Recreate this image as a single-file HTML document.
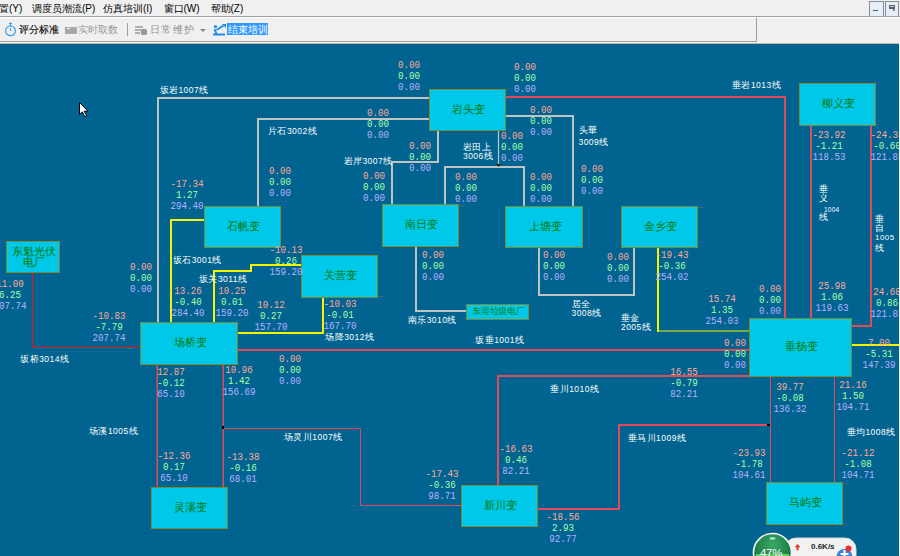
<!DOCTYPE html>
<html><head><meta charset="utf-8"><style>
*{margin:0;padding:0;box-sizing:border-box}
html,body{width:900px;height:556px;overflow:hidden;background:#f0f0f0;font-family:"Liberation Sans",sans-serif}
#menu{position:absolute;left:0;top:0;width:900px;height:16px;background:#f0f0f0}
#menu span{position:absolute;top:1.5px;font-size:10px;line-height:14px;color:#000;white-space:nowrap}
#tb{position:absolute;left:0;top:17px;width:757px;height:25px;background:#f0f0f0;border-top:1px solid #fff;border-right:1px solid #a0a0a0;border-bottom:1px solid #a0a0a0}
.tbt{position:absolute;top:23px;font-size:11px;line-height:14px;white-space:nowrap}
#cv{position:absolute;left:0;top:44px;width:899px;height:512px;background:#006390;overflow:hidden}
svg{position:absolute;left:0;top:0}
.st{position:absolute;background:#00c8e8;border:1px solid #7a8a30;color:#007a00;font-size:10.5px;line-height:11px;display:flex;align-items:center;justify-content:center;text-align:center;padding-bottom:2px;padding-left:2px}
.tr{position:absolute;width:60px;font-family:"Liberation Mono",monospace;font-size:10px;line-height:11px;text-align:center;white-space:pre;transform:scaleX(0.92)}
.tr i{display:block;font-style:normal}
.lb{position:absolute;color:#fff;font-size:8.5px;line-height:11px;white-space:nowrap;letter-spacing:0.45px}
</style></head><body>
<div id="menu">
<span style="left:-1px">置(Y)</span>
<span style="left:32px">调度员潮流(P)</span>
<span style="left:103px">仿真培训(I)</span>
<span style="left:163.5px">窗口(W)</span>
<span style="left:210.5px">帮助(Z)</span>
</div>
<div style="position:absolute;left:0;top:16px;width:900px;height:1px;background:#a0a0a0"></div>
<div id="tb"></div>
<div style="position:absolute;left:757px;top:17px;width:143px;height:25px;background:#f0f0f0;border-top:1px solid #fff"></div>
<div style="position:absolute;left:869px;top:1px;width:15px;height:15px;background:#e6eef8;border:1px solid #848c96;border-bottom:none"></div>
<div style="position:absolute;left:873px;top:10px;width:5px;height:1px;background:#505860"></div>
<div style="position:absolute;left:885px;top:1px;width:14px;height:15px;background:#e6eef8;border:1px solid #848c96;border-bottom:none"></div>
<svg width="900" height="45" style="position:absolute;left:0;top:0">
<rect x="889" y="5" width="6" height="4" fill="#586270"/><rect x="890" y="6" width="4" height="1" fill="#c8d0da"/><rect x="893" y="9" width="1.5" height="2" fill="#586270"/>
<circle cx="10.5" cy="30.8" r="4.9" fill="none" stroke="#3a9ef0" stroke-width="1.2"/>
<path d="M10.5 22.5v3.5 M9 23.5h3 M10.5 28v3" stroke="#3a9ef0" stroke-width="1.1" fill="none"/>
<rect x="65" y="27" width="12" height="7" fill="#a8a8a8"/>
<path d="M67 29l2 -1l1 1" stroke="#fff" stroke-width="1" fill="none"/>
<rect x="127" y="23" width="1" height="13" fill="#a0a0a0"/>
<path d="M135 27h8 M135 30h7 M135 33h5" stroke="#999" stroke-width="1.5"/>
<rect x="141" y="29" width="6" height="6" rx="1.5" fill="#999"/>
<path d="M200 29h6l-3 3z" fill="#888"/>
<circle cx="215.5" cy="26.5" r="1.6" fill="#1e8ce6"/><path d="M214.5 29l2 5 M216.5 30l7-4.5 M213 34.5h12" stroke="#1e8ce6" stroke-width="2" fill="none"/><path d="M222 24h4v4z" fill="#1e8ce6"/>
</svg>
<span class="tbt" style="left:18.5px;color:#000;font-size:10px;-webkit-text-stroke:0.15px #000">评分标准</span>
<span class="tbt" style="left:78px;color:#9a9a9a;font-size:10px">实时取数</span>
<span class="tbt" style="left:150px;color:#8c8c8c;font-size:10px;letter-spacing:1.4px">日常维护</span>
<span style="position:absolute;left:227px;top:23px;width:41px;height:12px;background:#3399ff"></span>
<span class="tbt" style="left:228px;color:#fff;font-size:10px">结束培训</span>

<div style="position:absolute;left:0;top:42px;width:900px;height:1px;background:#f4f2f0"></div><div style="position:absolute;left:0;top:43px;width:900px;height:1px;background:#c4baa8"></div><div id="cv"></div>
<svg width="900" height="556" viewBox="0 0 900 556" style="position:absolute;left:0;top:0">
<polyline points="158,322 158,98 429,98" fill="none" stroke="#c0c4c0" stroke-width="2" stroke-linecap="square"/>
<polyline points="258,206 258,119 429,119" fill="none" stroke="#c0c4c0" stroke-width="2" stroke-linecap="square"/>
<polyline points="438,131 438,162 392,162 392,204" fill="none" stroke="#c0c4c0" stroke-width="2" stroke-linecap="square"/>
<polyline points="445,204 445,167 524,167 524,206" fill="none" stroke="#c0c4c0" stroke-width="2" stroke-linecap="square"/>
<polyline points="506,116 573,116 573,206" fill="none" stroke="#c0c4c0" stroke-width="2" stroke-linecap="square"/>
<polyline points="416,247 416,311 466,311" fill="none" stroke="#c0c4c0" stroke-width="2" stroke-linecap="square"/>
<polyline points="539,248 539,295 634,295 634,248" fill="none" stroke="#c0c4c0" stroke-width="2" stroke-linecap="square"/>
<polyline points="498.5,131 498.5,166" fill="none" stroke="#c0c4c0" stroke-width="1.2"/><path d="M496 164h5l-2.5 3z" fill="#222"/>
<polyline points="506,97 785,97 785,318" fill="none" stroke="#e04a5a" stroke-width="2" stroke-linecap="square"/>
<polyline points="811,126 811,318" fill="none" stroke="#e04a5a" stroke-width="2" stroke-linecap="square"/>
<polyline points="871,126 871,326 852,326" fill="none" stroke="#e04a5a" stroke-width="2" stroke-linecap="square"/>
<polyline points="238,350 749,350" fill="none" stroke="#e04a5a" stroke-width="2" stroke-linecap="square"/>
<polyline points="498,485 498,376 749,376" fill="none" stroke="#e04a5a" stroke-width="2" stroke-linecap="square"/>
<polyline points="538,509 619,509 619,425 768,425" fill="none" stroke="#e04a5a" stroke-width="2" stroke-linecap="square"/>
<polyline points="223.5,428.5 360.5,428.5 360.5,505.5 461.5,505.5" fill="none" stroke="#e04a5a" stroke-width="1" stroke-linecap="square"/>
<polyline points="770.5,377.5 770.5,482.5" fill="none" stroke="#e04a5a" stroke-width="1" stroke-linecap="square"/>
<polyline points="834.5,377.5 834.5,482.5" fill="none" stroke="#e04a5a" stroke-width="1" stroke-linecap="square"/>
<polyline points="157.25,365 157.25,487" fill="none" stroke="#e04a5a" stroke-width="1.5"/>
<polyline points="223.25,365 223.25,487" fill="none" stroke="#e04a5a" stroke-width="1.5"/>
<path d="M767 424h3v2h-3z M222 426v3h2v-3z" fill="#000"/><polyline points="32.5,273 32.5,347.5 140,347.5" fill="none" stroke="#e8141e" stroke-width="1.2"/>
<polyline points="171,322 171,220 204,220" fill="none" stroke="#f4f400" stroke-width="2" stroke-linecap="square"/>
<polyline points="214,322 214,271 251,271 251,265 301,265" fill="none" stroke="#f4f400" stroke-width="2" stroke-linecap="square"/>
<polyline points="238,333 323,333 323,298" fill="none" stroke="#f4f400" stroke-width="2" stroke-linecap="square"/>
<polyline points="658,248 658,331" fill="none" stroke="#f4f400" stroke-width="2" stroke-linecap="square"/>
<polyline points="852,345 899,345" fill="none" stroke="#f4f400" stroke-width="2" stroke-linecap="square"/>
<polyline points="658,331 749,331" fill="none" stroke="#f4f400" stroke-width="1.2"/>
</svg>
<div class="st" style="left:429px;top:89px;width:77px;height:42px">岩头变</div>
<div class="st" style="left:799px;top:83px;width:77px;height:43px">柳义变</div>
<div class="st" style="left:204px;top:206px;width:77px;height:42px">石帆变</div>
<div class="st" style="left:382px;top:204px;width:77px;height:43px">南日变</div>
<div class="st" style="left:505px;top:206px;width:78px;height:42px">上塘变</div>
<div class="st" style="left:621px;top:206px;width:77px;height:42px">金乡变</div>
<div class="st" style="left:301px;top:255px;width:77px;height:43px">关营变</div>
<div class="st" style="left:6px;top:241px;width:54px;height:32px"><span style="font-size:10.5px;line-height:11px;display:block;margin-top:1px">东魁光伏<br>电厂</span></div>
<div class="st" style="left:466px;top:304px;width:63px;height:16px"><span style="font-size:9px;letter-spacing:-0.1px">东溶垃圾电厂</span></div>
<div class="st" style="left:140px;top:322px;width:98px;height:43px">场桥变</div>
<div class="st" style="left:749px;top:318px;width:103px;height:59px">垂杨变</div>
<div class="st" style="left:151px;top:487px;width:77px;height:42px">灵溪变</div>
<div class="st" style="left:461px;top:485px;width:77px;height:42px">新川变</div>
<div class="st" style="left:766px;top:482px;width:77px;height:43px">马屿变</div>
<div class="tr" style="left:379.00px;top:60.00px"><i style="color:#ffa898">0.00</i><i style="color:#a8ffa8">0.00</i><i style="color:#b8b0ff">0.00</i></div>
<div class="tr" style="left:495.00px;top:62.00px"><i style="color:#ffa898">0.00</i><i style="color:#a8ffa8">0.00</i><i style="color:#b8b0ff">0.00</i></div>
<div class="tr" style="left:348.00px;top:108.00px"><i style="color:#ffa898">0.00</i><i style="color:#a8ffa8">0.00</i><i style="color:#b8b0ff">0.00</i></div>
<div class="tr" style="left:389.50px;top:141.00px"><i style="color:#ffa898">0.00</i><i style="color:#a8ffa8">0.00</i><i style="color:#b8b0ff">0.00</i></div>
<div class="tr" style="left:344.00px;top:171.00px"><i style="color:#ffa898">0.00</i><i style="color:#a8ffa8">0.00</i><i style="color:#b8b0ff">0.00</i></div>
<div class="tr" style="left:249.50px;top:166.00px"><i style="color:#ffa898">0.00</i><i style="color:#a8ffa8">0.00</i><i style="color:#b8b0ff">0.00</i></div>
<div class="tr" style="left:157.00px;top:179.00px"><i style="color:#ffa898">-17.34</i><i style="color:#a8ffa8">1.27</i><i style="color:#b8b0ff">294.40</i></div>
<div class="tr" style="left:511.00px;top:105.00px"><i style="color:#ffa898">0.00</i><i style="color:#a8ffa8">0.00</i><i style="color:#b8b0ff">0.00</i></div>
<div class="tr" style="left:482.00px;top:131.00px"><i style="color:#ffa898">0.00</i><i style="color:#a8ffa8">0.00</i><i style="color:#b8b0ff">0.00</i></div>
<div class="tr" style="left:435.50px;top:171.50px"><i style="color:#ffa898">0.00</i><i style="color:#a8ffa8">0.00</i><i style="color:#b8b0ff">0.00</i></div>
<div class="tr" style="left:511.00px;top:171.50px"><i style="color:#ffa898">0.00</i><i style="color:#a8ffa8">0.00</i><i style="color:#b8b0ff">0.00</i></div>
<div class="tr" style="left:562.00px;top:163.50px"><i style="color:#ffa898">0.00</i><i style="color:#a8ffa8">0.00</i><i style="color:#b8b0ff">0.00</i></div>
<div class="tr" style="left:799.00px;top:130.00px"><i style="color:#ffa898">-23.92</i><i style="color:#a8ffa8">-1.21</i><i style="color:#b8b0ff">118.53</i></div>
<div class="tr" style="left:857.00px;top:130.00px"><i style="color:#ffa898">-24.38</i><i style="color:#a8ffa8">-0.60</i><i style="color:#b8b0ff">121.85</i></div>
<div class="tr" style="left:-20.00px;top:278.50px"><i style="color:#ffa898">11.00</i><i style="color:#a8ffa8">6.25</i><i style="color:#b8b0ff">207.74</i></div>
<div class="tr" style="left:110.50px;top:261.50px"><i style="color:#ffa898">0.00</i><i style="color:#a8ffa8">0.00</i><i style="color:#b8b0ff">0.00</i></div>
<div class="tr" style="left:157.75px;top:286.00px"><i style="color:#ffa898">13.26</i><i style="color:#a8ffa8">-0.40</i><i style="color:#b8b0ff">284.40</i></div>
<div class="tr" style="left:79.00px;top:311.00px"><i style="color:#ffa898">-10.83</i><i style="color:#a8ffa8">-7.79</i><i style="color:#b8b0ff">207.74</i></div>
<div class="tr" style="left:255.75px;top:244.50px"><i style="color:#ffa898">-10.13</i><i style="color:#a8ffa8">0.26</i><i style="color:#b8b0ff">159.20</i></div>
<div class="tr" style="left:201.60px;top:286.00px"><i style="color:#ffa898">10.25</i><i style="color:#a8ffa8">0.01</i><i style="color:#b8b0ff">159.20</i></div>
<div class="tr" style="left:241.00px;top:300.00px"><i style="color:#ffa898">10.12</i><i style="color:#a8ffa8">0.27</i><i style="color:#b8b0ff">157.70</i></div>
<div class="tr" style="left:310.00px;top:299.00px"><i style="color:#ffa898">-10.03</i><i style="color:#a8ffa8">-0.01</i><i style="color:#b8b0ff">167.70</i></div>
<div class="tr" style="left:402.50px;top:250.00px"><i style="color:#ffa898">0.00</i><i style="color:#a8ffa8">0.00</i><i style="color:#b8b0ff">0.00</i></div>
<div class="tr" style="left:523.50px;top:250.00px"><i style="color:#ffa898">0.00</i><i style="color:#a8ffa8">0.00</i><i style="color:#b8b0ff">0.00</i></div>
<div class="tr" style="left:587.50px;top:251.50px"><i style="color:#ffa898">0.00</i><i style="color:#a8ffa8">0.00</i><i style="color:#b8b0ff">0.00</i></div>
<div class="tr" style="left:642.00px;top:249.75px"><i style="color:#ffa898">-19.43</i><i style="color:#a8ffa8">-0.36</i><i style="color:#b8b0ff">254.02</i></div>
<div class="tr" style="left:740.40px;top:283.50px"><i style="color:#ffa898">0.00</i><i style="color:#a8ffa8">0.00</i><i style="color:#b8b0ff">0.00</i></div>
<div class="tr" style="left:692.00px;top:294.00px"><i style="color:#ffa898">15.74</i><i style="color:#a8ffa8">1.35</i><i style="color:#b8b0ff">254.03</i></div>
<div class="tr" style="left:801.60px;top:281.00px"><i style="color:#ffa898">25.98</i><i style="color:#a8ffa8">1.06</i><i style="color:#b8b0ff">119.63</i></div>
<div class="tr" style="left:857.00px;top:286.50px"><i style="color:#ffa898">24.68</i><i style="color:#a8ffa8">0.86</i><i style="color:#b8b0ff">121.85</i></div>
<div class="tr" style="left:704.60px;top:337.75px"><i style="color:#ffa898">0.00</i><i style="color:#a8ffa8">0.00</i><i style="color:#b8b0ff">0.00</i></div>
<div class="tr" style="left:654.40px;top:366.50px"><i style="color:#ffa898">16.55</i><i style="color:#a8ffa8">-0.79</i><i style="color:#b8b0ff">82.21</i></div>
<div class="tr" style="left:759.60px;top:381.50px"><i style="color:#ffa898">39.77</i><i style="color:#a8ffa8">-0.08</i><i style="color:#b8b0ff">136.32</i></div>
<div class="tr" style="left:848.75px;top:337.75px"><i style="color:#ffa898">7.00</i><i style="color:#a8ffa8">-5.31</i><i style="color:#b8b0ff">147.39</i></div>
<div class="tr" style="left:823.00px;top:380.25px"><i style="color:#ffa898">21.16</i><i style="color:#a8ffa8">1.50</i><i style="color:#b8b0ff">104.71</i></div>
<div class="tr" style="left:260.00px;top:354.00px"><i style="color:#ffa898">0.00</i><i style="color:#a8ffa8">0.00</i><i style="color:#b8b0ff">0.00</i></div>
<div class="tr" style="left:141.00px;top:367.00px"><i style="color:#ffa898">12.87</i><i style="color:#a8ffa8">-0.12</i><i style="color:#b8b0ff">65.10</i></div>
<div class="tr" style="left:209.40px;top:365.00px"><i style="color:#ffa898">10.96</i><i style="color:#a8ffa8">1.42</i><i style="color:#b8b0ff">156.69</i></div>
<div class="tr" style="left:144.25px;top:451.00px"><i style="color:#ffa898">-12.36</i><i style="color:#a8ffa8">0.17</i><i style="color:#b8b0ff">65.10</i></div>
<div class="tr" style="left:213.40px;top:452.00px"><i style="color:#ffa898">-13.38</i><i style="color:#a8ffa8">-0.16</i><i style="color:#b8b0ff">68.01</i></div>
<div class="tr" style="left:412.25px;top:469.00px"><i style="color:#ffa898">-17.43</i><i style="color:#a8ffa8">-0.36</i><i style="color:#b8b0ff">98.71</i></div>
<div class="tr" style="left:486.25px;top:444.00px"><i style="color:#ffa898">-16.63</i><i style="color:#a8ffa8">0.46</i><i style="color:#b8b0ff">82.21</i></div>
<div class="tr" style="left:532.50px;top:512.00px"><i style="color:#ffa898">-18.56</i><i style="color:#a8ffa8">2.93</i><i style="color:#b8b0ff">92.77</i></div>
<div class="tr" style="left:719.00px;top:448.00px"><i style="color:#ffa898">-23.93</i><i style="color:#a8ffa8">-1.78</i><i style="color:#b8b0ff">104.61</i></div>
<div class="tr" style="left:827.50px;top:448.00px"><i style="color:#ffa898">-21.12</i><i style="color:#a8ffa8">-1.08</i><i style="color:#b8b0ff">104.71</i></div>
<div class="lb" style="left:159.50px;top:85.00px">坂岩1007线</div>
<div class="lb" style="left:268.00px;top:125.50px">片石3002线</div>
<div class="lb" style="left:343.50px;top:156.00px">岩岸3007线</div>
<div class="lb" style="left:463.00px;top:142.00px">岩田上</div>
<div class="lb" style="left:463.00px;top:151.00px">3006线</div>
<div class="lb" style="left:578.50px;top:125.00px">头華</div>
<div class="lb" style="left:578.50px;top:136.50px">3009线</div>
<div class="lb" style="left:732.00px;top:80.00px">垂岩1013线</div>
<div class="lb" style="left:172.75px;top:254.50px">坂石3001线</div>
<div class="lb" style="left:199.00px;top:274.00px">坂关3011线</div>
<div class="lb" style="left:325.25px;top:331.50px">场降3012线</div>
<div class="lb" style="left:407.75px;top:315.00px">南乐3010线</div>
<div class="lb" style="left:475.25px;top:335.00px">坂垂1001线</div>
<div class="lb" style="left:571.50px;top:299.00px">居全</div>
<div class="lb" style="left:571.50px;top:307.75px">3008线</div>
<div class="lb" style="left:621.00px;top:312.75px">垂金</div>
<div class="lb" style="left:621.00px;top:321.50px">2005线</div>
<div class="lb" style="left:20.25px;top:354.00px">坂桥3014线</div>
<div class="lb" style="left:89.00px;top:426.00px">场溪1005线</div>
<div class="lb" style="left:284.00px;top:431.50px">场灵川1007线</div>
<div class="lb" style="left:550.25px;top:384.00px">垂川1010线</div>
<div class="lb" style="left:627.75px;top:433.00px">垂马川1009线</div>
<div class="lb" style="left:846.50px;top:426.50px">垂均1008线</div>

<div class="lb" style="left:819px;top:185px;line-height:9px;width:10px">垂<br>义</div>
<div class="lb" style="left:824px;top:204px;font-size:6.5px;letter-spacing:0.2px">1004</div>
<div class="lb" style="left:819px;top:212px">线</div>
<div class="lb" style="left:875px;top:215px;line-height:9px;width:10px">垂<br>自</div>
<div class="lb" style="left:875px;top:232px;font-size:8px">1005</div>
<div class="lb" style="left:875px;top:243px">线</div>
<svg width="900" height="556" style="position:absolute;left:0;top:0">
<path d="M79.5 102.5v12l2.8-2.6l2.6 4.8l1.8-1l-2.6-4.5h3.9z" fill="#fff" stroke="#000" stroke-width="1"/>
<rect x="785" y="538" width="71" height="30" rx="11" fill="#f2f2f2" stroke="#d8d8d8"/>
<defs><radialGradient id="gg" cx="0.5" cy="0.3" r="0.7"><stop offset="0" stop-color="#3aa866"/><stop offset="1" stop-color="#0f6a38"/></radialGradient></defs><circle cx="772.5" cy="552.5" r="19" fill="url(#gg)" stroke="#f4f4f4" stroke-width="1.6"/>
<rect x="756" y="554" width="33" height="2" fill="#5fd05f"/><ellipse cx="772.5" cy="538.5" rx="3" ry="1.2" fill="#cfe" opacity="0.8"/>
<path d="M797.5 544l-3 3.2h2v3h2v-3h2z" fill="#e83a2a"/>
<circle cx="844.5" cy="557" r="8" fill="#3d7fdc"/>
<path d="M844.5 550v8 M840.5 554h8" stroke="#fff" stroke-width="2"/>
<circle cx="848.5" cy="548.5" r="3" fill="#e8302a"/>
</svg>
<div style="position:absolute;left:760px;top:546px;color:#fff;font-size:11.5px;line-height:14px;letter-spacing:-0.3px">47%</div>
<div style="position:absolute;left:811px;top:542px;color:#222;font-size:8px;line-height:10px;font-weight:bold">0.6K/s</div>
<div style="position:absolute;left:899px;top:43px;width:1px;height:513px;background:#f4f4f4"></div>

</body></html>
